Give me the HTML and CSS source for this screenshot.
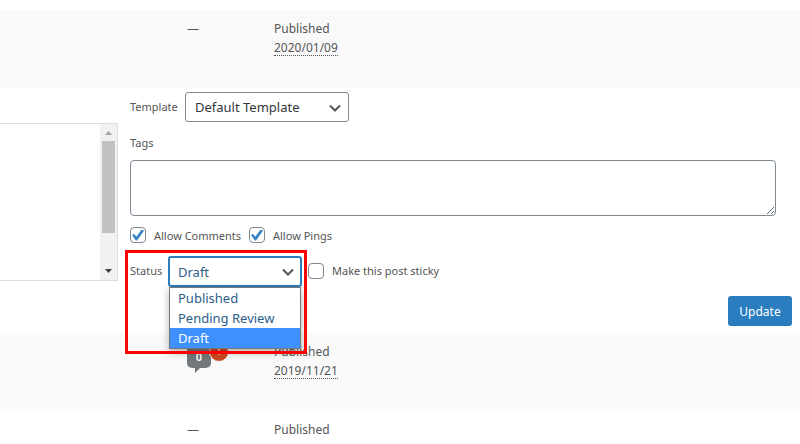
FILE: index.html
```html
<!DOCTYPE html>
<html lang="en">
<head>
    <meta charset="UTF-8">
    <meta name="viewport" content="width=device-width, initial-scale=1.0">
    <title>Posts</title>
    <link rel="stylesheet" href="styles.css">
</head>
<body>
    <table class="posts">
        <colgroup>
            <col class="col-title">
            <col class="col-comments">
            <col class="col-date">
        </colgroup>
        <tbody>
            <tr class="post alternate">
                <td></td>
                <td>—</td>
                <td>Published<br><abbr>2020/01/09</abbr></td>
            </tr>

            <!-- Quick edit -->
            <tr>
                <td colspan="3" class="quick-edit">
                    <form class="edit-form">
                        <div class="category-list">
                            <div class="scrollbar">
                                <svg width="7" height="4" viewBox="0 0 7 4"><path d="M0 4L3.5 0L7 4Z" fill="#a3a3a3"/></svg>
                                <div class="track"><div class="thumb"></div></div>
                                <svg width="7" height="4" viewBox="0 0 7 4"><path d="M0 0L3.5 4L7 0Z" fill="#404040"/></svg>
                            </div>
                        </div>

                        <div class="fields">
                            <div class="field template-field">
                                <label for="template">Template</label>
                                <div class="select-wrap">
                                    <select id="template">
                                        <option>Default Template</option>
                                    </select>
                                    <svg class="chevron" width="12" height="8" viewBox="0 0 12 8"><path d="M1 1.5L6 6.5L11 1.5" fill="none" stroke="#555" stroke-width="2"/></svg>
                                </div>
                            </div>

                            <label class="tags-label" for="tags">Tags</label>
                            <textarea id="tags"></textarea>

                            <div class="field checks">
                                <input type="checkbox" id="comments" checked>
                                <label for="comments">Allow Comments</label>
                                <input type="checkbox" id="pings" checked>
                                <label for="pings">Allow Pings</label>
                            </div>

                            <div class="field status-field">
                                <label for="status">Status</label>
                                <div class="select-wrap open">
                                    <select id="status">
                                        <option>Published</option>
                                        <option>Pending Review</option>
                                        <option selected>Draft</option>
                                    </select>
                                    <svg class="chevron" width="12" height="8" viewBox="0 0 12 8"><path d="M1 1.5L6 6.5L11 1.5" fill="none" stroke="#555" stroke-width="2"/></svg>
                                    <ul class="menu">
                                        <li>Published</li>
                                        <li>Pending Review</li>
                                        <li class="selected">Draft</li>
                                    </ul>
                                </div>
                                <input type="checkbox" id="sticky">
                                <label for="sticky">Make this post sticky</label>
                                <div class="highlight"></div>
                            </div>
                        </div>

                        <button type="submit">Update</button>
                    </form>
                </td>
            </tr>

            <tr class="post alternate">
                <td></td>
                <td>
                    <div class="bubble">
                        <span class="count">0</span>
                        <span class="pending">1</span>
                    </div>
                </td>
                <td>Published<br><abbr>2019/11/21</abbr></td>
            </tr>
            <tr class="post last">
                <td></td>
                <td>—</td>
                <td>Published</td>
            </tr>
        </tbody>
    </table>
</body>
</html>
```
FILE: styles.css
```css
* {
    box-sizing: border-box;
}
body {
    margin: 0;
    padding-top: 10px;
    background-color: #fff;
    color: #555;
    font-family: "Noto Sans", sans-serif;
    font-size: 11px;
}
.posts {
    width: 100%;
    table-layout: fixed;
    border-collapse: collapse;
}
.col-title {
    width: 187px;
}
.col-comments {
    width: 87px;
}
td {
    padding: 0;
    vertical-align: top;
}
.post td {
    height: 78px;
    padding-top: 9px;
    font-size: 12px;
    line-height: 19px;
}
.last td {
    height: auto;
}
.alternate {
    background-color: #f9f9f9;
}
abbr {
    border-bottom: 1px dotted #555;
    display: inline-block;
    line-height: 15px;
}

/* quick edit */
.edit-form {
    display: grid;
    grid-template-columns: 118px 1fr;
    column-gap: 12px;
    padding: 4px 8px 7px 0;
}
.category-list {
    display: flex;
    justify-content: flex-end;
    height: 158px;
    margin-top: 31px;
    border: 1px solid #ddd;
    border-left: none;
}
.scrollbar {
    display: flex;
    flex-direction: column;
    align-items: center;
    width: 17px;
    padding: 7px 0;
    background-color: #f1f1f1;
}
.track {
    flex: 1;
    width: 13px;
    padding: 6px 0;
}
.thumb {
    height: 92px;
    background-color: #c1c1c1;
}
.fields {
    padding-right: 16px;
}
.field {
    display: flex;
    align-items: center;
}
.field > label {
    white-space: nowrap;
}
.template-field label {
    width: 55px;
    padding-bottom: 2px;
}
.select-wrap {
    position: relative;
    width: 164px;
}
select {
    display: block;
    appearance: none;
    width: 100%;
    height: 30px;
    padding: 0 24px 0 9px;
    border: 1px solid #7e8993;
    border-radius: 3px;
    background-color: #fff;
    color: #32373c;
    font-family: inherit;
    font-size: 13px;
}
.chevron {
    position: absolute;
    right: 8px;
    top: 12px;
}
.tags-label {
    display: block;
    margin-top: 12px;
    line-height: 18px;
}
textarea {
    display: block;
    width: 100%;
    height: 56px;
    margin-top: 8px;
    border: 1px solid #7e8993;
    border-radius: 4px;
    font-family: inherit;
    font-size: 13px;
}
.checks {
    height: 16px;
    margin-top: 11px;
}
input[type="checkbox"] {
    appearance: none;
    display: grid;
    place-content: center;
    width: 16px;
    height: 16px;
    margin: 0;
    border: 1px solid #7e8993;
    border-radius: 4px;
    background-color: #fff;
}
input:checked::before {
    content: "";
    width: 12px;
    height: 11px;
    background-color: #3582c4;
    clip-path: polygon(0 50%, 18% 40%, 36% 66%, 80% 0, 100% 12%, 42% 100%, 32% 100%);
}
.checks label,
.status-field input + label {
    padding-left: 8px;
}
.checks label:first-of-type {
    width: 103px;
}
.status-field {
    position: relative;
    margin-top: 13px;
}
.status-field > label {
    padding-bottom: 2px;
}
.status-field > label:first-child {
    width: 38px;
}
.status-field input[type="checkbox"] {
    margin-bottom: 2px;
}
.open {
    width: 134px;
    margin-right: 6px;
}
.open select {
    height: 31px;
    border: 2px solid #2a7ebf;
    padding-left: 8px;
    color: #2b5d8a;
}
.menu {
    position: absolute;
    z-index: 1;
    top: 31px;
    left: 1px;
    right: 1px;
    margin: 0;
    padding: 0;
    border: 1px solid #777;
    background-color: #fff;
    box-shadow: 0 3px 8px rgba(0, 0, 0, 0.3);
    list-style: none;
    color: #2b5d8a;
    font-size: 13px;
    line-height: 20px;
}
.menu li {
    padding-left: 8px;
}
.menu .selected {
    background-color: #3e90ff;
    color: #fff;
}
.highlight {
    position: absolute;
    z-index: 2;
    top: -6px;
    left: -5px;
    width: 182px;
    height: 104px;
    border: 3px solid #f00;
    pointer-events: none;
}
button {
    grid-column: 2;
    justify-self: end;
    width: 64px;
    height: 30px;
    margin-top: 9px;
    padding: 0;
    border: none;
    border-radius: 3px;
    background-color: #2a7ebf;
    color: #fff;
    font-family: inherit;
    font-size: 12px;
}

/* comment count */
.bubble {
    position: relative;
    width: 24px;
}
.count {
    display: block;
    height: 26px;
    border-radius: 5px;
    background-color: #72777c;
    color: #fff;
    font-size: 11px;
    font-weight: 600;
    line-height: 30px;
    text-align: center;
}
.count::after {
    content: "";
    position: absolute;
    top: 26px;
    left: 8px;
    border-top: 5px solid #72777c;
    border-right: 5px solid transparent;
}
.pending {
    position: absolute;
    top: 0;
    left: 22px;
    width: 20px;
    height: 20px;
    border: 1px solid #f9f9f9;
    border-radius: 50%;
    background-color: #ca4a1f;
    color: #fff;
    font-size: 9px;
    line-height: 18px;
    text-align: center;
}
```
